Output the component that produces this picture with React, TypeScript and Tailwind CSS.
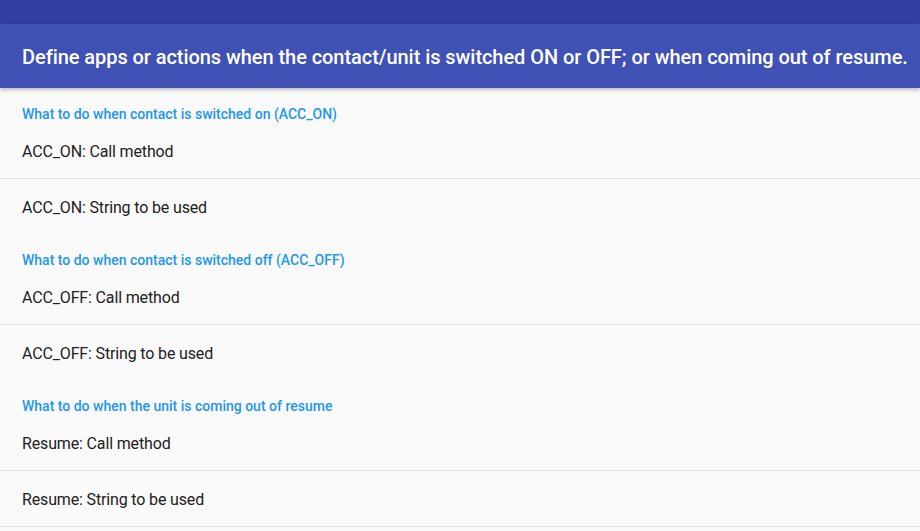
import React from 'react';

type Section = {
  title: string;
  items: string[];
};

const sections: Section[] = [
  {
    title: 'What to do when contact is switched on (ACC_ON)',
    items: ['ACC_ON: Call method', 'ACC_ON: String to be used'],
  },
  {
    title: 'What to do when contact is switched off (ACC_OFF)',
    items: ['ACC_OFF: Call method', 'ACC_OFF: String to be used'],
  },
  {
    title: 'What to do when the unit is coming out of resume',
    items: ['Resume: Call method', 'Resume: String to be used'],
  },
];

const App: React.FC = () => {
  return (
    <div className="h-[531px] w-[920px] overflow-hidden bg-[#fafafa] font-['Roboto',sans-serif]">
      <div className="h-[24px] bg-[#303f9f]" />
      <div className="relative z-10 flex h-[64px] items-center bg-[#3f51b5] px-[22px] pt-[2px] shadow-[0_2px_4px_rgba(0,0,0,0.25)]">
        <h1 className="whitespace-nowrap text-[20px] leading-[24px] font-medium tracking-[-0.06px] text-white">
          Define apps or actions when the contact/unit is switched ON or OFF; or when coming out of resume.
        </h1>
      </div>

      {sections.map((section, si) => (
        <div key={si}>
          <div className="h-[35px] px-[22px] pt-[18px] text-[14px] leading-[16px] font-medium text-[#2196f3]">
            {section.title}
          </div>
          {section.items.map((item, ii) => (
            <div key={ii}>
              <div className="flex h-[55px] items-center px-[22px] pt-[2px] text-[16px] tracking-[-0.15px] text-[#212121]">
                {item}
              </div>
              {(ii === 0 || si === sections.length - 1) && <div className="h-px bg-[#e0e0e0]" />}
            </div>
          ))}
        </div>
      ))}
    </div>
  );
};

export default App;
